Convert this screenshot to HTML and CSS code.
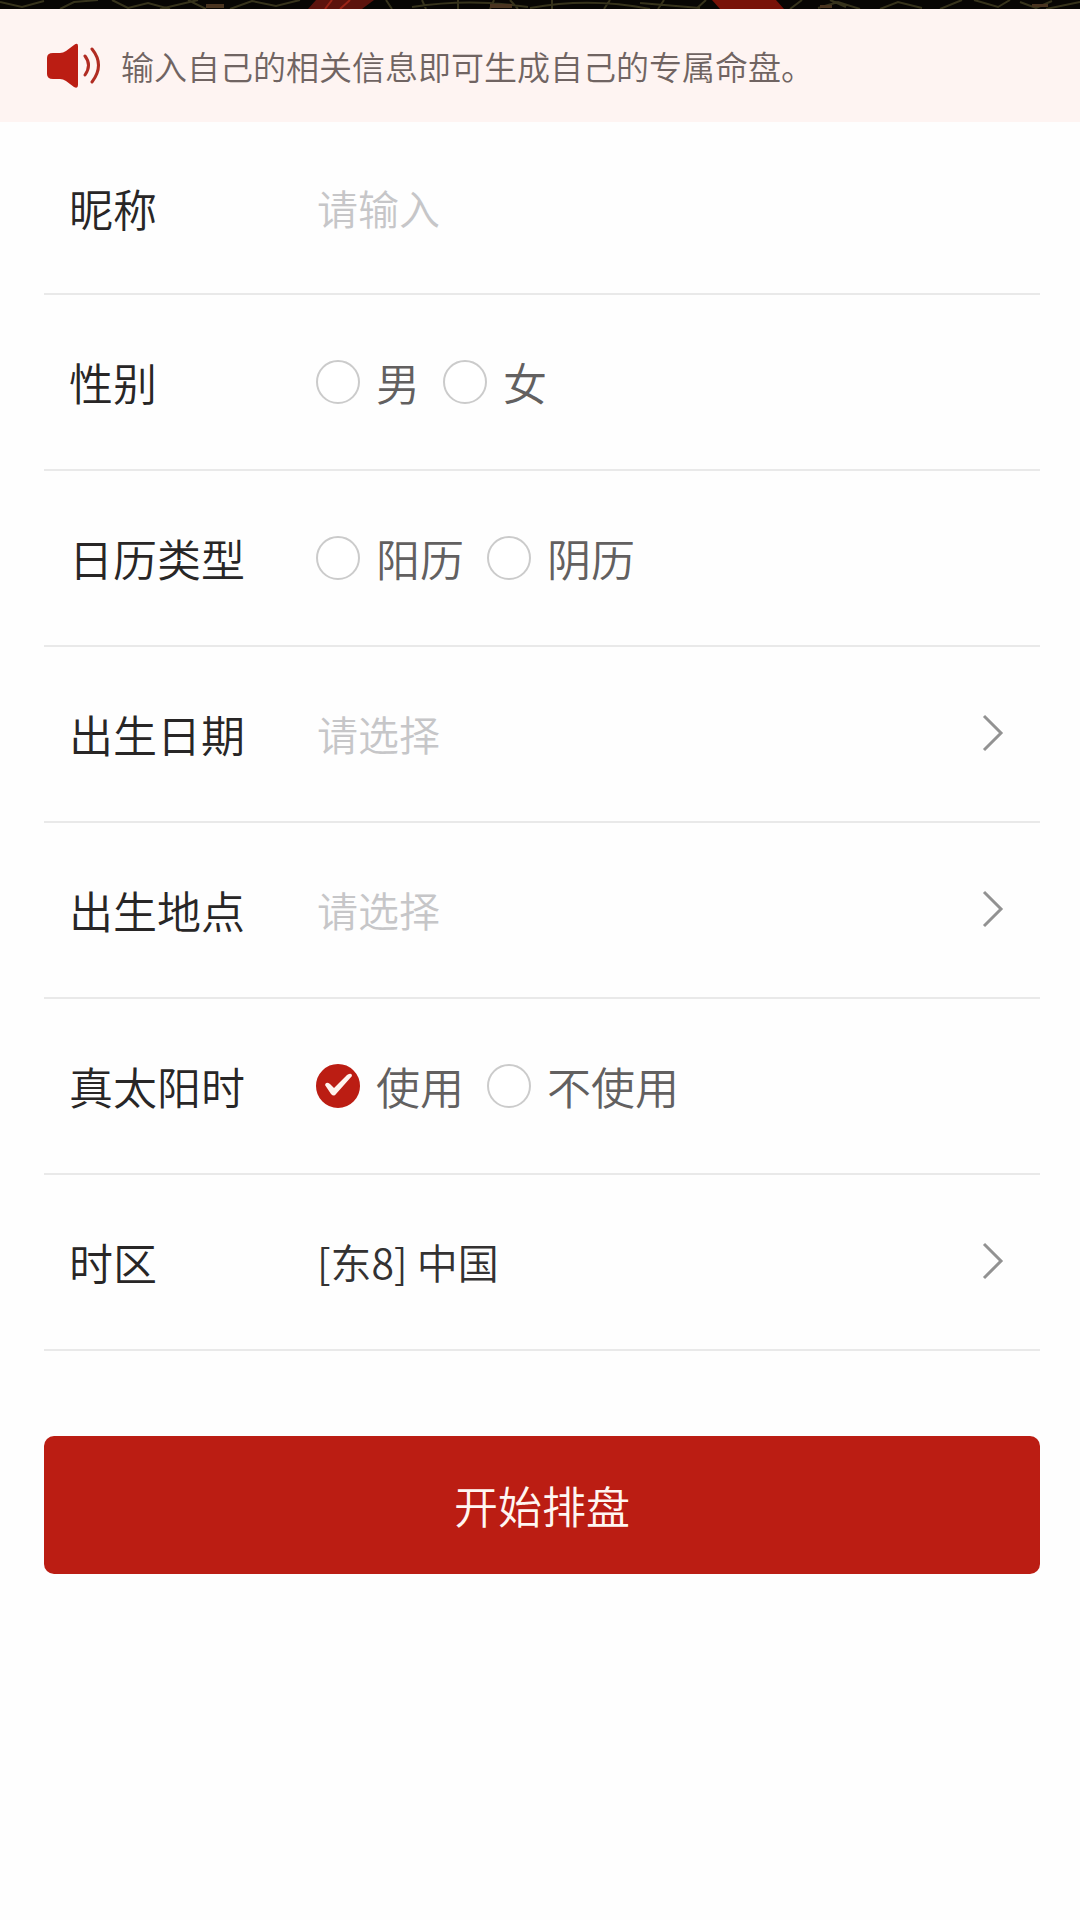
FILE: index.html
```html
<!DOCTYPE html>
<html lang="zh-CN">
<head>
<meta charset="utf-8">
<meta name="viewport" content="width=device-width, initial-scale=1">
<title>开始排盘</title>
<link rel="stylesheet" href="styles.css">
</head>
<body>
<header class="banner" aria-hidden="true">
  <svg class="banner-art" viewBox="0 0 1080 9" preserveAspectRatio="xMidYMax slice">
    <rect width="1080" height="9" fill="#080604"/>
    <path d="M308 9 316 0H374L362 9Z" fill="#5c130d"/>
    <path d="M712 0H776L784 9H720Z" fill="#781208"/>
    <path d="M325 9 332 0M340 9 350 0" stroke="#9a2417" stroke-width="2"/>
    <g fill="none" stroke="#37331c" stroke-width="2">
      <path d="M0 2 22 7 44 1M60 9 74 2 98 0M112 0 128 8 148 3 170 9M160 9 198 0M188 0 206 9M230 9 252 1 276 6 300 0"/>
      <path d="M386 0 392 9M412 7Q470-2 528 7M422 0 426 9M458 0V9M494 0 490 9M510 0 518 9M552 0V9M530 8Q590-3 650 9M610 0 604 9M664 0 658 9M640 3 700 8M696 9 706 0"/>
      <path d="M790 9 802 0M818 8 838 2 860 9M830 0 846 7M880 9 898 2 922 8M940 9 962 0M974 0 998 7 1010 0M1020 2 1036 8 1052 1M1046 9 1080 2"/>
    </g>
    <path d="M206 4h18v4h-18ZM490 4h22v4h-22ZM820 5h12v3h-12ZM1032 4h16v3h-16Z" fill="#4a3420"/>
  </svg>
</header>

<aside class="notice">
  <svg class="notice-icon" viewBox="0 0 56 46" aria-hidden="true">
    <path d="M8 10H15Q18 10 21 8L29 2Q33-1 33 3V42Q33 46 29 44L21 38Q18 36 15 36H8Q2 36 2 31V15Q2 10 8 10Z" fill="#bb1d13"/>
    <path d="M40 13Q47 22 40 32M47 6Q60 22 47 39" fill="none" stroke="#b12c22" stroke-width="3" stroke-linecap="round"/>
  </svg>
  <p class="notice-text">输入自己的相关信息即可生成自己的专属命盘。</p>
</aside>

<main>
  <form class="form">
    <div class="row">
      <label class="label" for="nickname">昵称</label>
      <input class="field" id="nickname" type="text" placeholder="请输入">
    </div>

    <div class="row" role="radiogroup" aria-labelledby="gender-label">
      <span class="label" id="gender-label">性别</span>
      <div class="options">
        <label class="option"><span class="radio"><input type="radio" name="gender" value="male"></span>男</label>
        <label class="option"><span class="radio"><input type="radio" name="gender" value="female"></span>女</label>
      </div>
    </div>

    <div class="row" role="radiogroup" aria-labelledby="calendar-label">
      <span class="label" id="calendar-label">日历类型</span>
      <div class="options">
        <label class="option"><span class="radio"><input type="radio" name="calendar" value="solar"></span>阳历</label>
        <label class="option"><span class="radio"><input type="radio" name="calendar" value="lunar"></span>阴历</label>
      </div>
    </div>

    <div class="row">
      <label class="label" for="birth-date">出生日期</label>
      <select class="field field-empty" id="birth-date"><option>请选择</option></select>
      <svg class="chevron" viewBox="0 0 22 40" aria-hidden="true"><path d="M2 2 19 19 2 36"/></svg>
    </div>

    <div class="row">
      <label class="label" for="birth-place">出生地点</label>
      <select class="field field-empty" id="birth-place"><option>请选择</option></select>
      <svg class="chevron" viewBox="0 0 22 40" aria-hidden="true"><path d="M2 2 19 19 2 36"/></svg>
    </div>

    <div class="row" role="radiogroup" aria-labelledby="solar-time-label">
      <span class="label" id="solar-time-label">真太阳时</span>
      <div class="options">
        <label class="option"><span class="radio"><input type="radio" name="solar-time" value="yes" checked><svg class="tick" viewBox="0 0 44 44" aria-hidden="true"><path d="M9 21Q10 17 14 20L18 24 31 11Q36 8 36 12L20 30Q18 33 15 30Z"/></svg></span>使用</label>
        <label class="option"><span class="radio"><input type="radio" name="solar-time" value="no"></span>不使用</label>
      </div>
    </div>

    <div class="row">
      <label class="label" for="timezone">时区</label>
      <select class="field" id="timezone"><option>[东8] 中国</option></select>
      <svg class="chevron" viewBox="0 0 22 40" aria-hidden="true"><path d="M2 2 19 19 2 36"/></svg>
    </div>

    <button class="submit" type="button">开始排盘</button>
  </form>
</main>
</body>
</html>
```

FILE: styles.css
```css
* {
  box-sizing: border-box;
}

body {
  margin: 0;
  background: #fefefe;
  color: #282626;
  font-family: "Noto Sans CJK SC", sans-serif;
  font-weight: 350;
}

.banner-art {
  display: block;
  width: 100%;
  height: 9px;
}

.notice {
  display: flex;
  align-items: center;
  gap: 20px;
  min-height: 113px;
  padding: 0 45px;
  background: #fef4f2;
}

.notice-icon {
  flex: none;
  width: 56px;
  height: 46px;
}

.notice-text {
  margin: 0;
  color: #706462;
  font-size: 33px;
  line-height: 48px;
}

.form {
  padding: 0 40px 0 44px;
}

.row {
  display: flex;
  align-items: center;
  height: 176px;
  padding: 0 36px 0 25px;
  border-bottom: 2px solid #e9e9e9;
}

.row:first-child {
  height: 173px;
}

.label {
  flex: none;
  width: 247px;
  font-size: 44px;
  line-height: 64px;
}

.field {
  flex: 1;
  min-width: 0;
  height: 64px;
  margin: 0;
  padding: 0 0 2px 1px;
  border: 0;
  outline: 0;
  appearance: none;
  background: transparent;
  color: #343232;
  font: inherit;
  font-size: 41px;
}

.field-empty,
.field::placeholder {
  color: #c6c6c8;
  opacity: 1;
}

.options {
  display: flex;
  gap: 23px;
}

.option {
  display: flex;
  align-items: center;
  gap: 16px;
  color: #626060;
  font-size: 44px;
  line-height: 64px;
}

.radio {
  display: grid;
}

.radio > * {
  grid-area: 1 / 1;
  width: 44px;
  height: 44px;
  margin: 0;
}

.radio input {
  appearance: none;
  border: 2px solid #cbcbcb;
  border-radius: 50%;
  background: #fff;
}

.radio input:checked {
  border-color: #bb1d13;
  background: #bb1d13;
}

.tick {
  fill: #fff4ee;
  pointer-events: none;
}

.chevron {
  flex: none;
  width: 22px;
  height: 40px;
  fill: none;
  stroke: #929292;
  stroke-width: 3;
}

.submit {
  display: block;
  width: 100%;
  height: 138px;
  margin: 85px 0 40px;
  padding: 0;
  border: 0;
  border-radius: 10px;
  background: #bb1d13;
  color: #fff6f2;
  font: inherit;
  font-size: 44px;
}
```
